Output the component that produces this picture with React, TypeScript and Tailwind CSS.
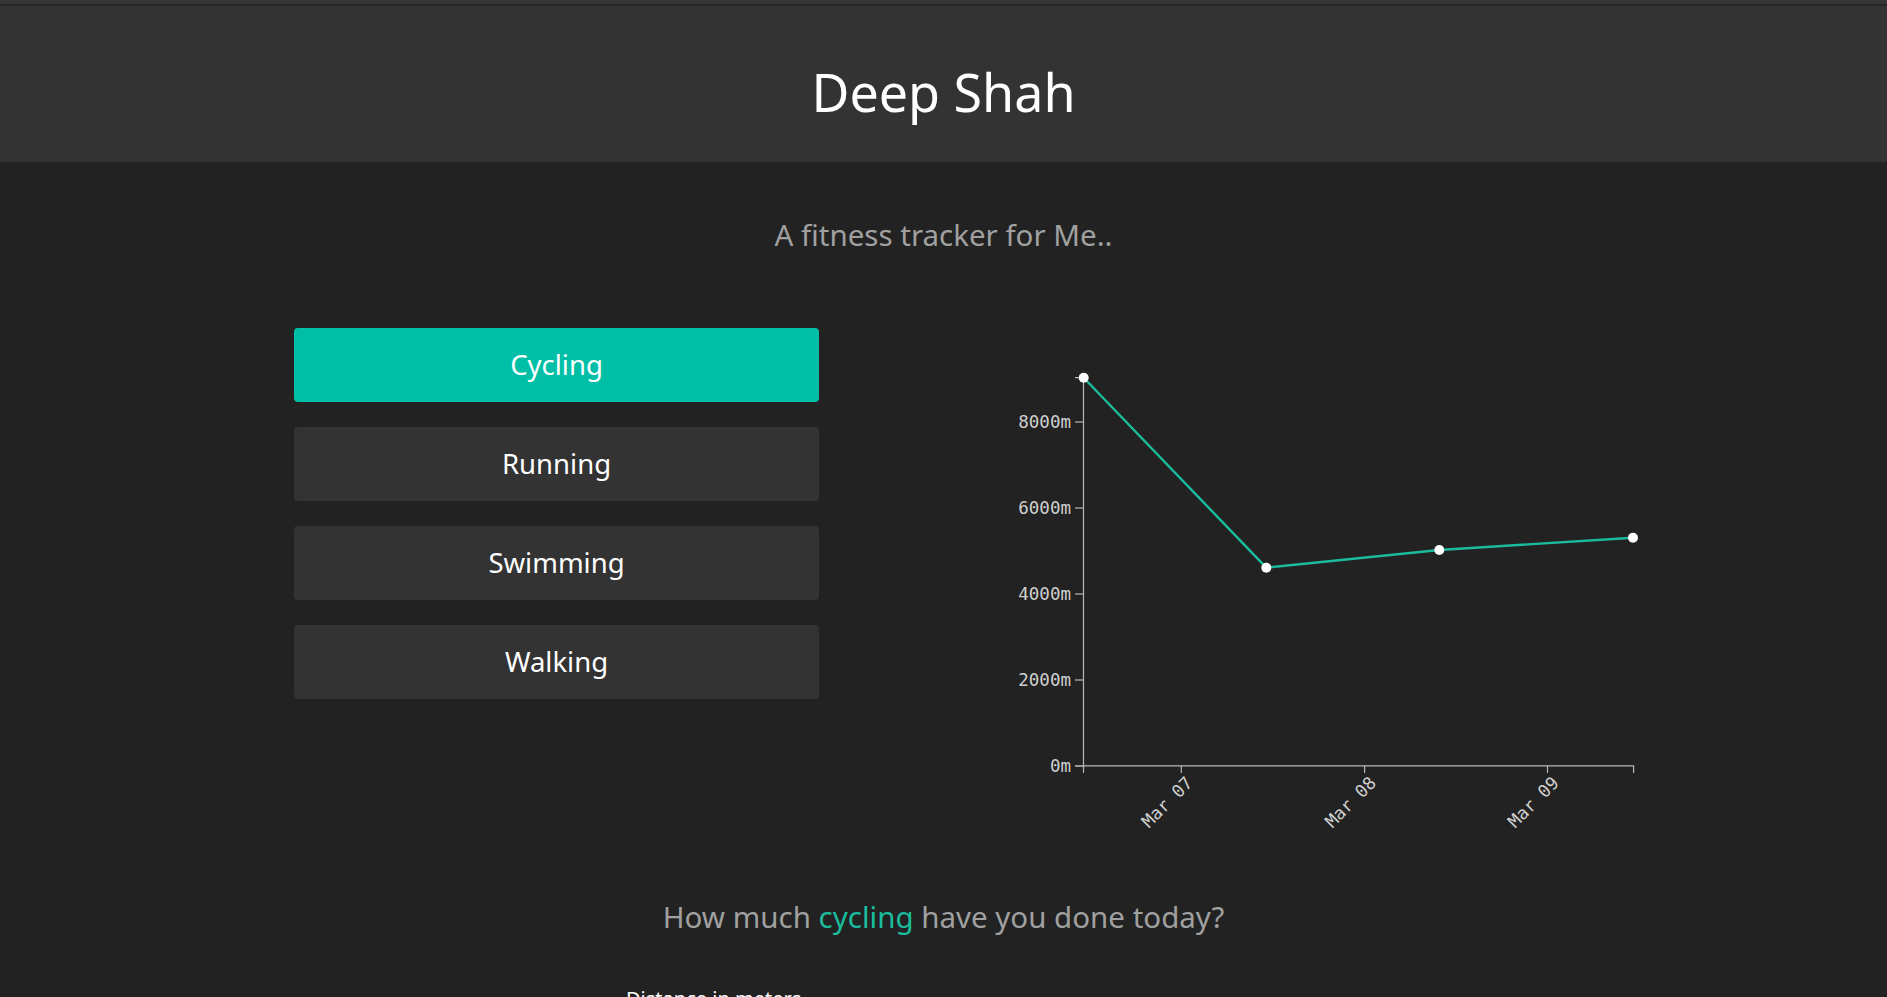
import React from "react";

const activities = ["Cycling", "Running", "Swimming", "Walking"];

const yScale = (v: number) => 438 - v * 0.043;

const points: [number, number][] = [
  [83.7, yScale(9030)],
  [266.3, yScale(4612)],
  [439.3, yScale(5023)],
  [633, yScale(5309)],
];

const yTicks = [0, 2000, 4000, 6000, 8000];
const xTicks: [number, string][] = [
  [181.3, "Mar 07"],
  [364.6, "Mar 08"],
  [547.5, "Mar 09"],
];

function Chart() {
  const axis = "#b8b8b8";
  const label = "#d0d0d0";
  const path = points.map((p, i) => `${i === 0 ? "M" : "L"}${p[0]},${p[1]}`).join(" ");
  return (
    <svg width={680} height={510} className="ml-[181px] shrink-0 overflow-visible">
      <g fontFamily='"DejaVu Sans Mono", "Liberation Mono", monospace' fontSize={17.5} fill={label}>
        {/* y axis domain with outer ticks */}
        <path d={`M75,${yScale(9030)}H83.5V438H75`} stroke={axis} strokeWidth={1.2} fill="none" />
        {yTicks.map((v) => (
          <g key={v}>
            <line x1={75} x2={83.5} y1={yScale(v)} y2={yScale(v)} stroke={axis} strokeWidth={1.2} />
            <text x={71} y={yScale(v)} dy="0.34em" textAnchor="end">
              {v}m
            </text>
          </g>
        ))}
        {/* x axis domain with outer ticks */}
        <path d="M83.5,445V437.8H633.6V445" stroke={axis} strokeWidth={1.2} fill="none" />
        {xTicks.map(([x, t]) => (
          <g key={t}>
            <line x1={x} x2={x} y1={437.8} y2={445} stroke={axis} strokeWidth={1.2} />
            <text x={x + 12.5} y={456} textAnchor="end" transform={`rotate(-45 ${x + 12.5} 456)`}>
              {t}
            </text>
          </g>
        ))}
      </g>
      <path d={path} stroke="#1abc9c" strokeWidth={2.4} fill="none" />
      {points.map((p, i) => (
        <circle key={i} cx={p[0]} cy={p[1]} r={5} fill="#ffffff" />
      ))}
    </svg>
  );
}

export default function App() {
  return (
    <div
      className="h-[997px] overflow-hidden bg-[#222222] text-white"
      style={{ fontFamily: '"Noto Sans", "Open Sans", sans-serif' }}
    >
      <div className="h-[4px] bg-[#363636]" />
      <div className="h-[2px] bg-[#262626]" />
      <header className="h-[156px] bg-[#333333] pt-[60px]">
        <h1 className="text-center text-[52px] leading-none font-normal text-white">Deep Shah</h1>
      </header>

      <p className="mt-[58px] text-center text-[29.5px] leading-[30px] text-[#a0a0a0]">
        A fitness tracker for Me..
      </p>

      <div className="mt-[78px] flex pl-[294px]">
        <div className="flex w-[525px] shrink-0 flex-col gap-[25px]">
          {activities.map((a, i) => (
            <button
              key={a}
              className={`flex h-[74px] items-center justify-center rounded-[4px] text-[27.5px] leading-none text-white ${
                i === 0 ? "bg-[#00bfa6]" : "bg-[#333333]"
              }`}
            >
              {a}
            </button>
          ))}
        </div>
        <Chart />
      </div>

      <p className="mt-[64px] text-center text-[29.5px] leading-[30px] text-[#a0a0a0]">
        How much <span className="text-[#1abc9c]">cycling</span> have you done today?
      </p>

      <div className="mx-auto mt-[57px] w-[635px]">
        <label className="block text-[20px] leading-none text-white">Distance in meters</label>
      </div>
    </div>
  );
}
